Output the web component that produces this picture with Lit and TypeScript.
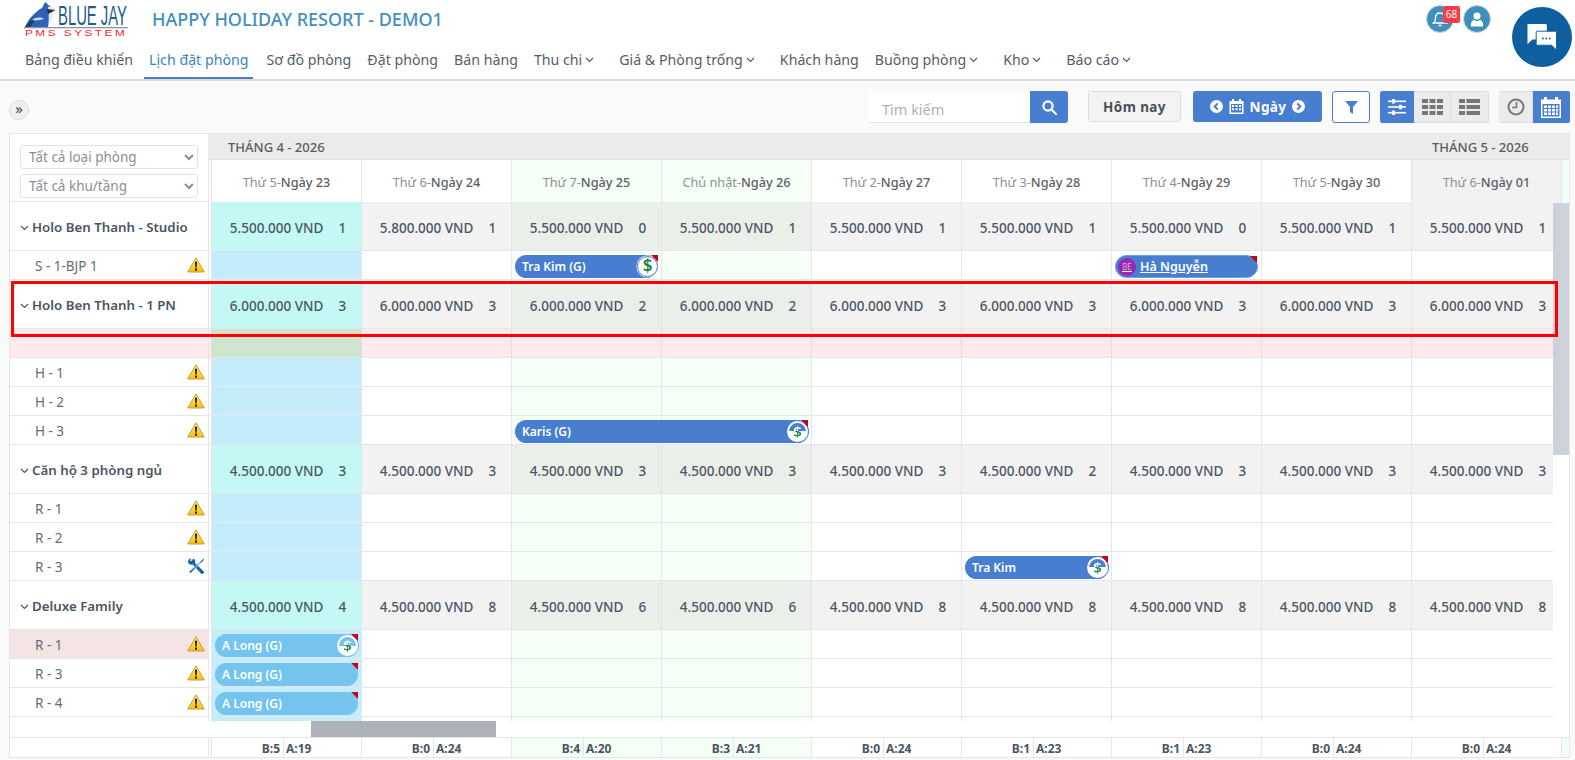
import { LitElement, html, css, svg } from 'lit';
import { customElement } from 'lit/decorators.js';
import { classMap } from 'lit/directives/class-map.js';

type DayKind = 'today' | 'normal' | 'weekend' | 'other';
type DollarKind = 'full' | 'half' | 'none';

interface Booking {
  col: number;
  span?: number;
  name: string;
  dollar?: DollarKind;
  light?: boolean;
  avatar?: boolean;
}

interface Row {
  type: 'group' | 'room' | 'alert';
  label: string;
  price?: string[] | string;
  counts?: number[];
  icon?: 'warn' | 'tools';
  hot?: boolean;
  bookings?: Booking[];
}

const DAYS: { name: string; date: string; kind: DayKind }[] = [
  { name: 'Thứ 5', date: 'Ngày 23', kind: 'today' },
  { name: 'Thứ 6', date: 'Ngày 24', kind: 'normal' },
  { name: 'Thứ 7', date: 'Ngày 25', kind: 'weekend' },
  { name: 'Chủ nhật', date: 'Ngày 26', kind: 'weekend' },
  { name: 'Thứ 2', date: 'Ngày 27', kind: 'normal' },
  { name: 'Thứ 3', date: 'Ngày 28', kind: 'normal' },
  { name: 'Thứ 4', date: 'Ngày 29', kind: 'normal' },
  { name: 'Thứ 5', date: 'Ngày 30', kind: 'normal' },
  { name: 'Thứ 6', date: 'Ngày 01', kind: 'other' },
];

const ROWS: Row[] = [
  {
    type: 'group',
    label: 'Holo Ben Thanh - Studio',
    price: ['5.500.000', '5.800.000', '5.500.000', '5.500.000', '5.500.000', '5.500.000', '5.500.000', '5.500.000', '5.500.000'],
    counts: [1, 1, 0, 1, 1, 1, 0, 1, 1],
  },
  {
    type: 'room',
    label: 'S - 1-BJP 1',
    icon: 'warn',
    bookings: [
      { col: 2, name: 'Tra Kim (G)', dollar: 'full' },
      { col: 6, name: 'Hà Nguyễn', avatar: true },
    ],
  },
  { type: 'group', label: 'Holo Ben Thanh - 1 PN', price: '6.000.000', counts: [3, 3, 2, 2, 3, 3, 3, 3, 3] },
  { type: 'alert', label: '' },
  { type: 'room', label: 'H - 1', icon: 'warn' },
  { type: 'room', label: 'H - 2', icon: 'warn' },
  { type: 'room', label: 'H - 3', icon: 'warn', bookings: [{ col: 2, span: 2, name: 'Karis (G)', dollar: 'half' }] },
  { type: 'group', label: 'Căn hộ 3 phòng ngủ', price: '4.500.000', counts: [3, 3, 3, 3, 3, 2, 3, 3, 3] },
  { type: 'room', label: 'R - 1', icon: 'warn' },
  { type: 'room', label: 'R - 2', icon: 'warn' },
  { type: 'room', label: 'R - 3', icon: 'tools', bookings: [{ col: 5, name: 'Tra Kim', dollar: 'half' }] },
  { type: 'group', label: 'Deluxe Family', price: '4.500.000', counts: [4, 8, 6, 6, 8, 8, 8, 8, 8] },
  { type: 'room', label: 'R - 1', icon: 'warn', hot: true, bookings: [{ col: 0, name: 'A Long (G)', dollar: 'half', light: true }] },
  { type: 'room', label: 'R - 3', icon: 'warn', bookings: [{ col: 0, name: 'A Long (G)', light: true }] },
  { type: 'room', label: 'R - 4', icon: 'warn', bookings: [{ col: 0, name: 'A Long (G)', light: true }] },
  { type: 'room', label: 'R - 5' },
];

const TOTALS = [
  ['B:5', 'A:19'], ['B:0', 'A:24'], ['B:4', 'A:20'], ['B:3', 'A:21'], ['B:0', 'A:24'],
  ['B:1', 'A:23'], ['B:1', 'A:23'], ['B:0', 'A:24'], ['B:0', 'A:24'],
];

const NAV = [
  { label: 'Bảng điều khiển' },
  { label: 'Lịch đặt phòng', active: true },
  { label: 'Sơ đồ phòng' },
  { label: 'Đặt phòng' },
  { label: 'Bán hàng' },
  { label: 'Thu chi', menu: true },
  { label: 'Giá & Phòng trống', menu: true },
  { label: 'Khách hàng' },
  { label: 'Buồng phòng', menu: true },
  { label: 'Kho', menu: true },
  { label: 'Báo cáo', menu: true },
];

const chevron = html`<svg class="chev" width="9" height="6" viewBox="0 0 9 6"><path d="M1 1l3.5 3.5L8 1" fill="none" stroke="currentColor" stroke-width="1.2"/></svg>`;

const warnIcon = html`<svg width="18" height="16" viewBox="0 0 18 16">
  <defs><linearGradient id="wg" x1="0" y1="0" x2="0" y2="1"><stop offset="0" stop-color="#ffe97a"/><stop offset="1" stop-color="#f5c400"/></linearGradient></defs>
  <path d="M9 .8 17.3 15H.7z" fill="url(#wg)" stroke="#c99a3c" stroke-width="1" stroke-linejoin="round"/>
  <path d="M8 4.8h2l-.4 6H8.4z" fill="#111"/><rect x="8" y="11.6" width="2" height="2" fill="#111"/>
</svg>`;

const toolsIcon = html`<svg width="18" height="18" viewBox="0 0 18 18" fill="none">
  <path d="M4.2 1.2a3.6 3.6 0 0 0-3 4.6 3.6 3.6 0 0 0 4.4 1.6L14 16.4a1.6 1.6 0 0 0 2.5-2.2L8 6a3.6 3.6 0 0 0-1.6-4.5L4.6 3.9 3 3.4z" fill="#1565a8"/>
  <path d="M16.8 1.2 13.6 4 12.8 5.6 2.2 14.6l1.3 1.9L13.2 6.2l1.6-.6 2.4-3.2z" fill="#1565a8" stroke="#fff" stroke-width=".5"/>
</svg>`;

const calendarSmall = html`<svg width="15" height="15" viewBox="0 0 15 15" fill="#fff">
  <path d="M3 0h2v2h5V0h2v2h2.5v13H.5V2H3zM2 5v8.5h11V5z"/>
  <path d="M3 6h2v2H3zm3.5 0h2v2h-2zm3.5 0h2v2h-2zm-7 3.300h2v2H3zm3.500 0h2v2h-2zm3.500 0h2v2h-2z"/>
</svg>`;

@customElement('app-root')
export class AppRoot extends LitElement {
  static styles = css`
    :host {
      display: block;
      width: 1575px;
      height: 760px;
      overflow: hidden;
      position: relative;
      background: #fafafa;
      font-family: 'Noto Sans', 'Open Sans', sans-serif;
      color: #4b5563;
    }
    * { box-sizing: border-box; }

    /* header */
    .header { height: 81px; background: #fff; border-bottom: 2px solid #dcdcdc; }
    .top { height: 42px; display: flex; align-items: flex-start; position: relative; }
    .logo { margin-left: 24px; width: 106px; height: 38px; flex: none; }
    .title { margin: 7px 0 0 22px; font-size: 18px; line-height: 24px; font-weight: 500; color: #3f8fc0; }
    .top-icons { margin: 5px 0 0 auto; padding-right: 84px; display: flex; gap: 9px; }
    .round { width: 28px; height: 28px; border-radius: 50%; background: #3f8fbc; border: 1px solid #cfd8df; display: flex; align-items: center; justify-content: center; position: relative; }
    .badge { position: absolute; left: 16px; top: 0; width: 17px; height: 17px; border-radius: 2px; background: #fb3b46; color: #fff; font-size: 10px; line-height: 17px; text-align: center; }
    .chat { position: absolute; left: 1512px; top: 7px; width: 60px; height: 60px; border-radius: 50%; background: #0e5f9f; display: flex; align-items: center; justify-content: center; }
    .nav { height: 37px; display: flex; padding-left: 17px; }
    .nav a { height: 37px; padding: 0 8px; font-size: 14.2px; line-height: 36px; color: #565d66; white-space: nowrap; display: flex; align-items: center; gap: 3px; border-bottom: 2px solid transparent; }
    .nav a.menu { margin-right: 9px; }
    .nav a.active { color: #3a87b5; border-bottom-color: #4a7cc4; padding: 0 5px; margin: 0 5px 0 3px; }
    .chev { margin-top: 1px; flex: none; }

    /* toolbar */
    .toolbar { height: 52px; display: flex; align-items: flex-start; padding: 10px 5px 0 9px; }
    .expand { width: 20px; height: 20px; margin-top: 9px; border-radius: 50%; background: #f0f0f0; border: 1px solid #dcdcdc; font-size: 15px; line-height: 15px; text-align: center; color: #444; }
    .search { margin-left: auto; display: flex; height: 32px; }
    .search .input { width: 162px; background: #fff; border-bottom: 1px solid #e4e4e4; border-radius: 3px 0 0 3px; padding-left: 14px; font-size: 14.5px; line-height: 36px; color: #a9b2bd; }
    .blue { background: #477ed0; color: #fff; }
    .search .go { width: 38px; border-radius: 0 3px 3px 0; display: flex; align-items: center; justify-content: center; }
    .btn { height: 31px; border-radius: 3px; display: flex; align-items: center; justify-content: center; font-size: 13.500px; font-weight: 700; letter-spacing: .4px; }
    .btn-today { margin-left: 20px; width: 93px; background: #f3f3f3; border: 1px solid #dedede; color: #4b4f56; }
    .btn-day { margin-left: 12px; width: 129px; gap: 6px; }
    .filter { margin-left: 10px; width: 38px; height: 32px; background: #fff; border: 1px solid #477ed0; }
    .seg { margin-left: 10px; display: flex; height: 32px; border-radius: 3px; overflow: hidden; }
    .seg div { display: flex; align-items: center; justify-content: center; background: #ebebeb; border: 1px solid #dcdcdc; border-left-width: 0; }
    .seg div.blue { background: #477ed0; border-color: #477ed0; }

    /* scheduler */
    .board { margin-left: 9px; width: 1561px; height: 625px; border: 1px solid #e4e6ea; background: #fff; position: relative; overflow: hidden; }
    .head { display: flex; height: 68px; }
    .filters { width: 198px; flex: none; padding: 11px 10px 0; display: flex; flex-direction: column; gap: 5px; border-bottom: 1px solid #e4e6ea; }
    select { width: 178px; height: 24px; border: 1px solid #dfe4ec; border-radius: 3px; background: #fff; color: #8a8f96; font: 13.500px 'Noto Sans', sans-serif; padding: 0 4px; outline: none; }
    .head-right { flex: 1; min-width: 0; }
    .months { display: flex; height: 26px; background: #ebebeb; font-size: 13px; font-weight: 500; line-height: 26px; color: #565b62; border-bottom: 1px solid #e0e0e0; }
    .months span { padding-left: 20px; }
    .months span:first-child { width: 1204px; flex: none; }
    .dates { display: grid; grid-template-columns: 3px repeat(9, 150px) 20px; height: 42px; }
    .rowline { display: grid; grid-template-columns: 198px 3px repeat(9, 150px); border-bottom: 1px solid #e4e6ea; }
    .date { border-left: 1px solid #e4e6ea; border-bottom: 1px solid #e4e6ea; font-size: 12.700px; line-height: 44px; text-align: center; color: #8c9097; white-space: nowrap; }
    .date b { font-weight: 500; color: #5a6068; }
    .date.weekend, .date.tail { background: #f6fff5; }
    .date.other { background: #f2f2f2; }
    .gapcell { border-left: 1px solid #e4e6ea; border-bottom: 1px solid #e4e6ea; }

    .main { display: flex; height: 519px; }
    .rows { width: 1543px; flex: none; overflow: hidden; }
    .vtrack { flex: 1; padding-top: 1px; }
    .vthumb { height: 252px; background: #cdd2da; }
    .group { height: 49px; }
    .room { height: 29px; }
    .alert { height: 29px; background: #feeaea; }
    .name { display: flex; align-items: center; white-space: nowrap; }
    .group .name { padding: 2px 0 0 10px; gap: 3px; font-size: 13.3px; font-weight: 600; color: #4b5563; }
    .room .name { padding: 2px 3px 0 25px; font-size: 13.5px; color: #666b72; justify-content: space-between; }
    .room .name svg { margin-top: -2px; }
    .room .name.hot { background: #f5e4e4; }
    .gap { border-left: 1px solid #e4e6ea; }
    .cell { position: relative; border-left: 1px solid #e4e6ea; }
    .group .cell { background: #f2f2f2; display: flex; align-items: center; justify-content: center; gap: 15px; font-size: 13.500px; font-weight: 500; color: #4b5563; padding: 4px 0 0 3px; white-space: nowrap; }
    .group .cell.weekend { background: #ebefe9; }
    .group .cell.today { background: #c3f8f5; }
    .room .cell.weekend { background: #f6fff5; }
    .room .cell.today { background: #c5ecfa; }
    .alert .cell { border-left-color: #eadada; }
    .alert .cell.today { background: #cfe4cf; }
    .alert .name { background: #feeaea; }

    .bar { position: absolute; left: 3px; top: 4px; height: 23px; border-radius: 12px; background: #477ed0; color: #fff; font-size: 12px; font-weight: 600; line-height: 23px; padding-left: 7px; white-space: nowrap; z-index: 1; }
    .bar.light { background: #74c4ee; padding-left: 7px; }
    .bar.person { display: flex; align-items: center; gap: 4px; padding-left: 2px; font-size: 12.500px; text-decoration: underline; border: 1px solid #6f9be0; }
    .bar::after { content: ''; position: absolute; right: 0; top: 0; border-top: 7px solid #c4001a; border-left: 7px solid transparent; }
    .avatar { width: 18px; height: 18px; border-radius: 50%; background: #9c27b0; color: #d9a8e2; font-size: 8px; font-weight: 400; line-height: 18px; text-align: center; flex: none; display: inline-block; }
    .coin { position: absolute; right: 0; top: 1px; width: 21px; height: 21px; border-radius: 50%; background: #fff; border: 1.500px solid #3f74c6; box-shadow: 0 0 0 .5px #fff; font-size: 17px; font-weight: 600; line-height: 18px; text-align: center; color: #1f7f3c; }
    .coin.half { background: linear-gradient(#477ed0 50%, #fff 50%); border: 2px solid #fff; box-shadow: 0 0 0 1px #477ed0; font-size: 15px; line-height: 16px; }
    .light .coin.half { background: linear-gradient(#74c4ee 50%, #fff 50%); box-shadow: 0 0 0 1px #74c4ee; }
    .coin.half span { color: transparent; background: linear-gradient(#fff 48%, #1f8f42 48%); -webkit-background-clip: text; background-clip: text; }

    .hscroll { height: 17px; position: relative; border-bottom: 1px solid #e4e6ea; padding-left: 301px; }
    .hthumb { width: 185px; height: 16px; background: #adb2b9; }
    .foot { display: grid; grid-template-columns: 198px 3px repeat(9, 150px) 20px; height: 19px; }
    .foot .total { border-left: 1px solid #e4e6ea; display: flex; font-size: 12px; font-weight: 700; line-height: 21px; color: #4b5563; }
    .total span:first-child { width: 71px; text-align: right; padding-right: 3px; }
    .total span:last-child { border-left: 1px solid #e4e6ea; padding-left: 2px; }
    .foot .total.weekend, .foot .tail { background: #f6fff5; }
    .foot .tail { border-left: 1px solid #e4e6ea; }

    /* red highlight frame over the 1 PN row */
    .frame { position: absolute; left: 11px; top: 281px; width: 1547px; height: 56px; border: 3px solid #f00; z-index: 5; pointer-events: none; }
  `;

  private coin(kind: DollarKind | undefined) {
    if (!kind || kind === 'none') return null;
    return html`<div class=${kind === 'half' ? 'coin half' : 'coin'}><span>$</span></div>`;
  }

  private bar(b: Booking) {
    const width = 143 + ((b.span ?? 1) - 1) * 150;
    return html`<div class=${classMap({ bar: true, light: !!b.light, person: !!b.avatar })} style="width:${width}px">
      ${b.avatar ? html`<span class="avatar">BE</span>` : null}<span>${b.name}</span>${this.coin(b.dollar)}
    </div>`;
  }

  private renderRow(row: Row) {
    if (row.type === 'group') {
      return html`<div class="rowline group">
        <div class="name">${chevron}<span>${row.label}</span></div>
        <div class="gap"></div>
        ${DAYS.map((d, i) => html`<div class="cell ${d.kind}">
          <span>${Array.isArray(row.price) ? row.price[i] : row.price} VND</span><span>${row.counts![i]}</span>
        </div>`)}
      </div>`;
    }
    return html`<div class="rowline ${row.type}">
      <div class=${classMap({ name: true, hot: !!row.hot })}>
        <span>${row.label}</span>
        ${row.icon === 'warn' ? warnIcon : row.icon === 'tools' ? toolsIcon : null}
      </div>
      <div class="gap"></div>
      ${DAYS.map((d, i) => html`<div class="cell ${d.kind}">
        ${(row.bookings ?? []).filter(b => b.col === i).map(b => this.bar(b))}
      </div>`)}
    </div>`;
  }

  private logo() {
    return html`<svg class="logo" viewBox="0 0 106 38">
      <path d="M1 27C5 18 11 12 18 8L21 2l6 5c2 5 0 13-3 20z" fill="#2e62b8"/>
      <path d="M1 27c3-5 7-8 11-9-2 4-4 7-6 9z" fill="#243b66"/>
      <path d="M8 20c4-3 9-3 12-1-4 1-8 2-12 1z" fill="#cfe0f5"/>
      <path d="M24 7c4-1 7 1 8 3l1 1.500-4 .5c0 5-2 10-5 15 1-7 1-14 0-20z" fill="#e8e8e8"/>
      <path d="M23 9l8 1-3 2-4 2z" fill="#2b2f36"/>
      <rect x="0" y="27" width="104" height="1.300" fill="#8f959c"/>
      ${svg`<text transform="translate(34 25) scale(.55 1)" font-family="Liberation Sans" font-size="27" fill="#1d5c8c">BLUE JAY</text>`}
      ${svg`<text transform="translate(1 36) scale(1.400 1)" font-family="Liberation Sans" font-size="8.400" letter-spacing="1.800" fill="#f02430">PMS SYSTEM</text>`}
    </svg>`;
  }

  private header() {
    return html`<div class="header">
      <div class="top">
        ${this.logo()}
        <div class="title">HAPPY HOLIDAY RESORT - DEMO1</div>
        <div class="top-icons">
          <div class="round">
            <svg width="16" height="17" viewBox="0 0 16 17" fill="none" stroke="#fff" stroke-width="1.300"><path d="M8 2c-3 0-4.500 2-4.500 5 0 3-1 4-2 5h13c-1-1-2-2-2-5 0-3-1.500-5-4.500-5z"/><path d="M6.500 14.500h3" stroke-width="1.600"/></svg>
            <div class="badge">68</div>
          </div>
          <div class="round">
            <svg width="14" height="15" viewBox="0 0 14 15" fill="#fff"><circle cx="7" cy="4" r="3.500"/><path d="M1 14.500c-.6-4 1.500-6.500 3-6.500 1 .8 1.800 1 3 1s2-.2 3-1c1.500 0 3.600 2.500 3 6.500z"/></svg>
          </div>
        </div>
      </div>
      <nav class="nav">
        ${NAV.map(n => html`<a class=${classMap({ menu: !!n.menu, active: !!n.active })}>${n.label}${n.menu ? chevron : null}</a>`)}
      </nav>
    </div>
    <div class="chat">
      <svg width="32" height="29" viewBox="0 0 32 30">
        <path d="M1 1h19a1 1 0 0 1 1 1v15H6l-5 5z" fill="#fff"/>
        <path d="M11 8.500h19a1 1 0 0 1 1 1V23v5l-5-5H11a1 1 0 0 1-1-1V9.500a1 1 0 0 1 1-1z" fill="#fff" stroke="#0e5f9f" stroke-width="1"/>
        <circle cx="17" cy="16" r="1" fill="#0e5f9f"/><circle cx="20.500" cy="16" r="1" fill="#0e5f9f"/><circle cx="24" cy="16" r="1" fill="#0e5f9f"/>
      </svg>
    </div>`;
  }

  private circleChevron(left: boolean) {
    return html`<svg width="13" height="13" viewBox="0 0 13 13"><circle cx="6.500" cy="6.500" r="6.500" fill="#fff"/><path d=${left ? 'M7.800 3.400 4.700 6.500l3.100 3.100' : 'M5.200 3.400l3.100 3.100-3.100 3.100'} fill="none" stroke="#477ed0" stroke-width="2"/></svg>`;
  }

  private toolbar() {
    return html`<div class="toolbar">
      <div class="expand">»</div>
      <div class="search">
        <div class="input">Tìm kiếm</div>
        <div class="go blue"><svg width="15" height="15" viewBox="0 0 15 15" fill="none" stroke="#fff" stroke-width="2.200"><circle cx="6" cy="6" r="4.600"/><path d="M9.500 9.500 14 14" stroke-linecap="round"/></svg></div>
      </div>
      <div class="btn btn-today">Hôm nay</div>
      <div class="btn btn-day blue">${this.circleChevron(true)}${calendarSmall}<span>Ngày</span>${this.circleChevron(false)}</div>
      <div class="btn filter"><svg width="13" height="13" viewBox="0 0 13 13"><path d="M0 0h13L8 6v7L5 11V6z" fill="#477ed0"/></svg></div>
      <div class="seg">
        <div class="blue" style="width:34px"><svg width="18" height="16" viewBox="0 0 18 16" fill="#fff"><rect y="1.500" width="18" height="1.600"/><rect y="7.200" width="18" height="1.600"/><rect y="12.900" width="18" height="1.600"/><rect x="4" width="3" height="4.600" rx=".5"/><rect x="11" y="5.700" width="3" height="4.600" rx=".5"/><rect x="4" y="11.400" width="3" height="4.600" rx=".5"/></svg></div>
        <div style="width:37px"><svg width="21" height="16" viewBox="0 0 21 16" fill="#777"><rect width="6" height="4"/><rect x="7.500" width="6" height="4"/><rect x="15" width="6" height="4"/><rect y="6" width="6" height="4"/><rect x="7.500" y="6" width="6" height="4"/><rect x="15" y="6" width="6" height="4"/><rect y="12" width="6" height="4"/><rect x="7.500" y="12" width="6" height="4"/><rect x="15" y="12" width="6" height="4"/></svg></div>
        <div style="width:38px"><svg width="21" height="16" viewBox="0 0 21 16" fill="#777"><rect width="6" height="4"/><rect x="7.500" width="13.500" height="4"/><rect y="6" width="6" height="4"/><rect x="7.500" y="6" width="13.500" height="4"/><rect y="12" width="6" height="4"/><rect x="7.500" y="12" width="13.500" height="4"/></svg></div>
      </div>
      <div class="seg">
        <div style="width:34px"><svg width="18" height="18" viewBox="0 0 18 18" fill="none" stroke="#777"><circle cx="9" cy="9" r="7.500" stroke-width="2"/><path d="M9.500 4v5.500H5" stroke-width="1.600"/></svg></div>
        <div class="blue" style="width:37px"><svg width="20" height="21" viewBox="0 0 20 21" fill="#fff"><path d="M3 0h3v2.500h8V0h3v2.500h3V21H0V2.500h3zM1.500 7v12.500h17V7z"/><path d="M3 8.500h3v2.500H3zm4 0h3v2.500H7zm4 0h3v2.500h-3zm4 0h2v2.500h-2zM3 12h3v2.500H3zm4 0h3v2.500H7zm4 0h3v2.500h-3zm4 0h2v2.500h-2zM3 15.500h3V18H3zm4 0h3V18H7zm4 0h3V18h-3zm4 0h2V18h-2z"/></svg></div>
      </div>
    </div>`;
  }

  render() {
    return html`
      ${this.header()}
      ${this.toolbar()}
      <div class="board">
        <div class="head">
          <div class="filters">
            <select><option>Tất cả loại phòng</option></select>
            <select><option>Tất cả khu/tầng</option></select>
          </div>
          <div class="head-right">
            <div class="months"><span>THÁNG 4 - 2026</span><span>THÁNG 5 - 2026</span></div>
            <div class="dates">
              <div class="gapcell"></div>
              ${DAYS.map(d => html`<div class="date ${d.kind}">${d.name}-<b>${d.date}</b></div>`)}
              <div class="date tail"></div>
            </div>
          </div>
        </div>
        <div class="main">
          <div class="rows">${ROWS.map(r => this.renderRow(r))}</div>
          <div class="vtrack"><div class="vthumb"></div></div>
        </div>
        <div class="hscroll"><div class="hthumb"></div></div>
        <div class="foot">
          <div></div><div class="gap"></div>
          ${TOTALS.map((t, i) => html`<div class="total ${DAYS[i].kind}"><span>${t[0]}</span><span>${t[1]}</span></div>`)}
          <div class="tail"></div>
        </div>
      </div>
      <div class="frame"></div>
    `;
  }
}

declare global {
  interface HTMLElementTagNameMap {
    'app-root': AppRoot;
  }
}
